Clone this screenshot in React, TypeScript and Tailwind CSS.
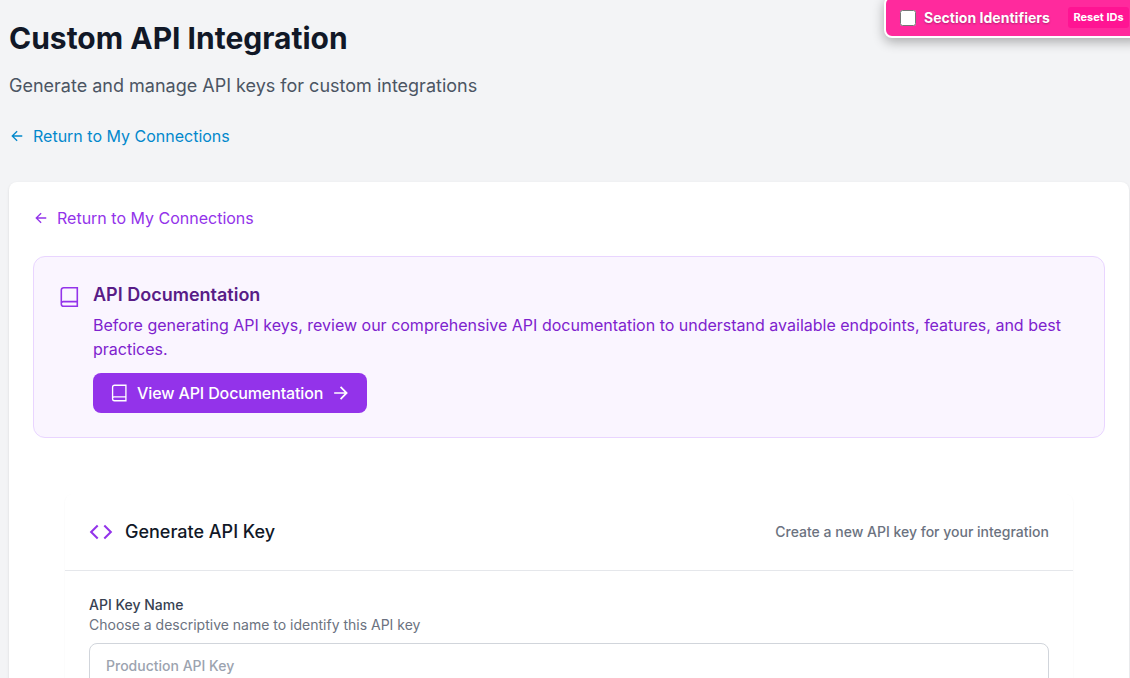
import { RiArrowLeftLine, RiArrowRightLine, RiCodeLine } from "react-icons/ri";

function BookIcon({ className }: { className: string }) {
  return (
    <svg viewBox="0 0 24 24" fill="none" stroke="currentColor" strokeWidth="1.6" className={className}>
      <path d="M20.3 16.6H6.2a2.4 2.4 0 0 0-2 1.2M4.3 19V5a2.3 2.3 0 0 1 2.3-2.3h13.7v18.6H6.6A2.3 2.3 0 0 1 4.3 19Z" />
    </svg>
  );
}

function SectionToggle() {
  return (
    <div className="absolute top-[-4px] left-[884px] flex h-[42px] w-[260px] items-center rounded-lg border-2 border-white bg-[#ff2a9d] pl-[14px] text-white shadow-[0_4px_12px_rgba(0,0,0,0.3)]">
      <input type="checkbox" className="mt-[2px] h-4 w-4" />
      <span className="mt-[2px] ml-2 text-sm font-bold tracking-[0.03px] [text-shadow:0_1px_2px_rgba(0,0,0,0.3)]">Section Identifiers</span>
      <button className="ml-[18px] h-[21px] rounded-[3px] bg-[#ff1493] px-[5.5px] text-[11px] font-bold">Reset IDs</button>
    </div>
  );
}

function ReturnLink({ className }: { className: string }) {
  return (
    <a href="#" className={`flex h-6 w-fit items-center text-base ${className}`}>
      <RiArrowLeftLine viewBox="0.6 0.3 23.4 23.4" className="mr-2 h-4 w-4" />
      Return to My Connections
    </a>
  );
}

export default function App() {
  return (
    <div className="relative h-[678px] w-[1130px] overflow-hidden bg-gray-100 pt-[18px] pl-[9px] font-['Inter',sans-serif]">
      <SectionToggle />
      <h1 className="text-[30px] leading-10 font-bold text-[#111827]">Custom API Integration</h1>
      <p className="mt-3.5 text-lg leading-7 text-[#4b5563]">Generate and manage API keys for custom integrations</p>
      <ReturnLink className="mt-6 text-[#0288cc]" />

      <main className="mt-[34px] h-[700px] w-[1120px] rounded-lg bg-white p-6 shadow-sm">
        <ReturnLink className="text-[#9333ea]" />
        <section className="mt-[26px] flex h-[182px] rounded-xl border border-[#e9d5ff] bg-[#faf5ff] pt-6 pr-6 pl-[23px]">
          <BookIcon className="mt-1 h-6 w-6 shrink-0 text-[#9333ea]" />
          <div className="ml-3">
            <h2 className="text-lg leading-[27px] font-semibold text-[#581c87]">API Documentation</h2>
            <p className="mt-[5px] text-base leading-6 text-[#7e22ce]">
              Before generating API keys, review our comprehensive API documentation to understand available endpoints, features, and best practices.
            </p>
            <a href="#" className="mt-3 flex h-10 w-[274px] items-center rounded-lg bg-[#9333ea] pl-4 text-base font-medium tracking-[-0.12px] text-white">
              <BookIcon className="mr-2 h-5 w-5" />
              View API Documentation
              <RiArrowRightLine viewBox="0.3 0.3 23.4 23.4" className="ml-2 h-5 w-5" />
            </a>
          </div>
        </section>

        <section className="mx-8 mt-14 h-[300px] rounded-lg bg-white shadow-[0_1px_2px_rgba(0,0,0,0.05)]">
          <header className="flex h-[77px] items-center justify-between border-b border-[#e5e7eb] px-6">
            <h2 className="flex items-center text-lg font-medium text-[#111827]">
              <RiCodeLine viewBox="0.3 0.3 23.4 23.4" className="mr-3 h-6 w-6 text-[#9333ea]" />
              Generate API Key
            </h2>
            <p className="text-sm font-medium text-[#6b7280]">Create a new API key for your integration</p>
          </header>
          <div className="px-6 pt-6">
            <label className="block text-sm leading-5 font-medium text-[#374151]">API Key Name</label>
            <p className="text-sm leading-5 text-[#6b7280]">Choose a descriptive name to identify this API key</p>
            <input
              placeholder="Production API Key"
              className="mt-2 h-[46px] w-full rounded-lg border border-[#d1d5db] bg-white px-4 pb-[2px] text-sm font-medium placeholder:text-[#9ca3af]"
            />
          </div>
        </section>
      </main>
    </div>
  );
}
